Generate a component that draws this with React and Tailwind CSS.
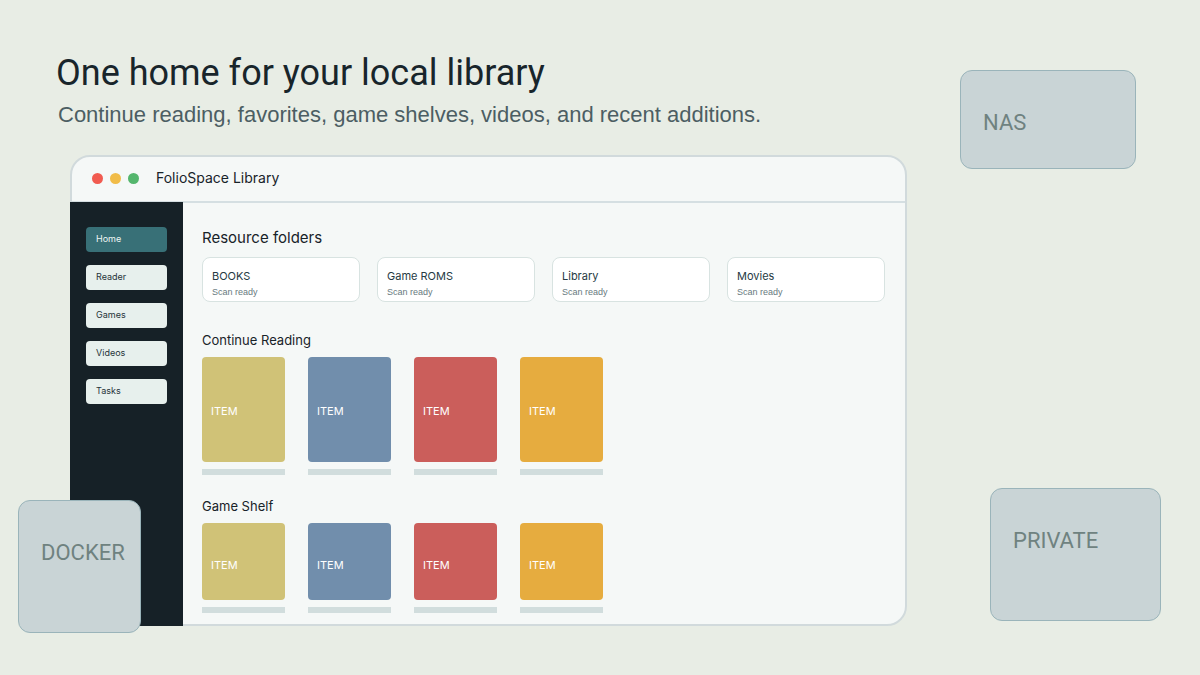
const navItems = ["Home", "Reader", "Games", "Videos", "Tasks"];
const folders = ["BOOKS", "Game ROMS", "Library", "Movies"];
const covers = ["bg-[#d0c277]", "bg-[#718eac]", "bg-[#cb5e5b]", "bg-[#e6ac3f]"];
const windowControls = [
  { label: "Close", color: "bg-[#f15b50]" },
  { label: "Minimize", color: "bg-[#f1bc48]" },
  { label: "Zoom", color: "bg-[#54b66d]" },
];

function Tag({ children, className }) {
  return (
    <div
      className={`rounded-xl border border-[#9ab4ba] bg-[#c9d4d6] pl-[22px] pt-9 font-['Roboto',sans-serif] text-[22px] leading-8 text-[#6f8280] ${className}`}
    >
      {children}
    </div>
  );
}

function Shelf({ title, coverClass, className }) {
  return (
    <section className={className}>
      <h2 className="text-[13px] leading-5">{title}</h2>
      <ul className="mt-[7px] flex gap-[23px]">
        {covers.map((color) => (
          <li key={color} className="w-[83px]">
            <div
              className={`flex items-center rounded-[4px] pl-[9px] text-[11px] text-white ${coverClass} ${color}`}
            >
              ITEM
            </div>
            <div className="mt-[7px] h-1.5 bg-[#d1dddd]" />
          </li>
        ))}
      </ul>
    </section>
  );
}

function LibraryWindow() {
  return (
    <div className="relative mt-6 ml-[14px]">
      <div className="rounded-[20px] rounded-bl-none border-2 border-[#d1dadc] bg-[#f5f8f7] text-[#182329]">
        <header className="flex h-[46px] items-center border-b-2 border-[#d5dfe2] pb-0.5 pl-5">
          <div className="flex gap-[7px]">
            {windowControls.map(({ label, color }) => (
              <button
                key={label}
                type="button"
                aria-label={label}
                className={`size-[11px] rounded-full ${color}`}
              />
            ))}
          </div>
          <span className="ml-[17px] text-sm">FolioSpace Library</span>
        </header>
        <div className="flex">
          <nav className="-mb-0.5 -ml-0.5 -mt-px flex w-[113px] shrink-0 flex-col gap-[13px] bg-[#162127] px-4 pt-[25px]">
            {navItems.map((item, i) => (
              <button
                key={item}
                type="button"
                className={`h-[25px] rounded-[4px] px-2.5 pb-0.5 text-left text-[9px] ${
                  i === 0 ? "bg-[#387077] text-[#eef5f3]" : "bg-[#e7f0ed] text-[#26343a]"
                }`}
              >
                {item}
              </button>
            ))}
          </nav>
          <main className="min-w-0 flex-1 pb-[11px] pl-[19px] pr-5 pt-[25px]">
            <section>
              <h2 className="text-[15px] leading-5">Resource folders</h2>
              <ul className="mt-[9px] grid grid-cols-4 gap-[17px]">
                {folders.map((name) => (
                  <li
                    key={name}
                    className="h-[45px] rounded-lg border border-[#d8e3e1] bg-white px-[9px] pt-[10px]"
                  >
                    <h3 className="text-[11px] leading-4 text-[#263a43]">{name}</h3>
                    <p className="font-['Liberation_Sans',sans-serif] text-[9px] leading-4 text-[#687a7e]">
                      Scan ready
                    </p>
                  </li>
                ))}
              </ul>
            </section>
            <Shelf title="Continue Reading" coverClass="h-[105px] pt-1" className="mt-7" />
            <Shelf title="Game Shelf" coverClass="h-[77px] pt-2" className="mt-[21px]" />
          </main>
        </div>
      </div>
      <Tag className="absolute -bottom-[7px] -left-[52px] h-[133px] w-[123px]">DOCKER</Tag>
    </div>
  );
}

export default function App() {
  return (
    <div className="flex min-h-screen gap-[53px] bg-[#e8ede5] pl-14 pr-[39px] font-['Inter',sans-serif]">
      <div className="min-w-0 flex-1 pb-12 pt-12">
        <h1 className="whitespace-nowrap font-['Roboto',sans-serif] text-4xl leading-[50px] text-[#18252b]">
          One home for your local library
        </h1>
        <p className="mt-px whitespace-nowrap pl-0.5 font-['Liberation_Sans',sans-serif] text-[22px] leading-8 text-[#4c5e63]">
          Continue reading, favorites, game shelves, videos, and recent additions.
        </p>
        <LibraryWindow />
      </div>
      <aside className="flex w-[201px] shrink-0 flex-col justify-between pb-[54px] pt-[70px]">
        <Tag className="h-[99px] w-[176px]">NAS</Tag>
        <Tag className="h-[133px] w-[171px] self-end">PRIVATE</Tag>
      </aside>
    </div>
  );
}
